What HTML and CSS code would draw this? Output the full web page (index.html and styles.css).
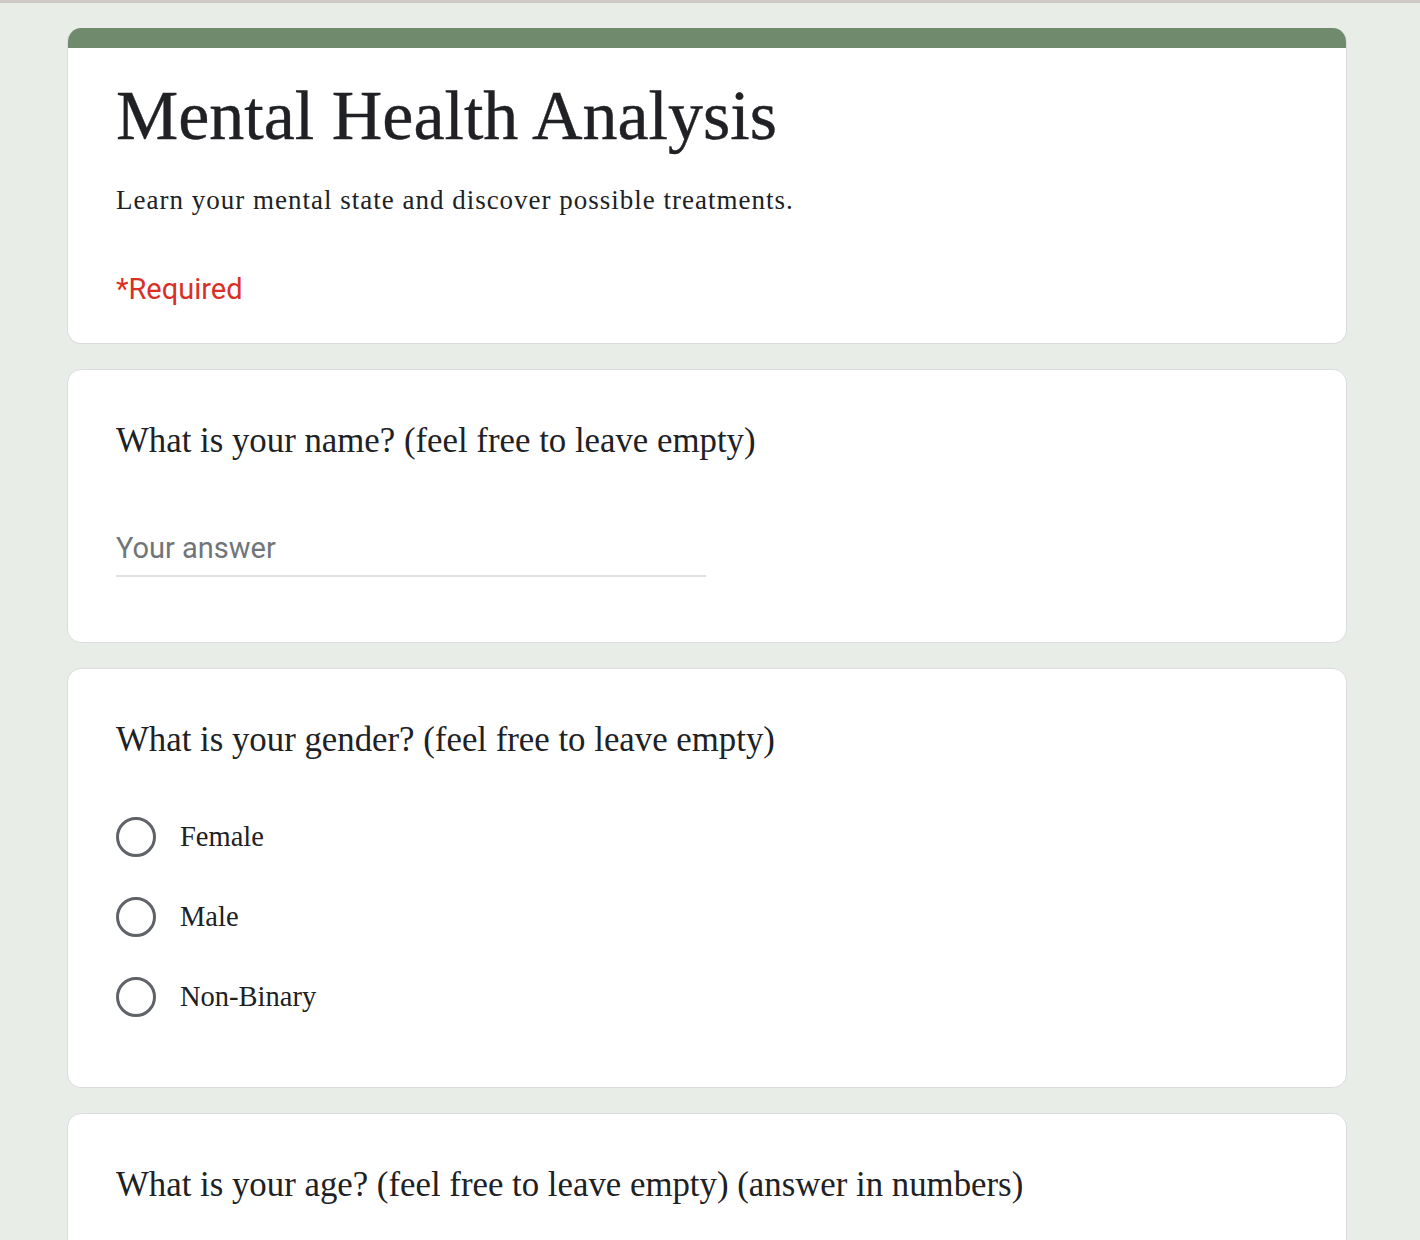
FILE: index.html
```html
<!DOCTYPE html>
<html>
<head>
<meta charset="utf-8">
<link rel="stylesheet" href="styles.css">
</head>
<body>
<div class="topline"></div>
<main class="form">
  <section class="card header-card">
    <div class="accent"></div>
    <div class="header-body">
      <h1 class="title">Mental Health Analysis</h1>
      <p class="desc">Learn your mental state and discover possible treatments.</p>
      <p class="required">*Required</p>
    </div>
  </section>

  <section class="card question">
    <h2 class="q-title">What is your name? (feel free to leave empty)</h2>
    <div class="text-input">Your answer</div>
  </section>

  <section class="card question">
    <h2 class="q-title">What is your gender? (feel free to leave empty)</h2>
    <div class="options">
      <label class="option"><span class="radio"></span><span class="opt-label">Female</span></label>
      <label class="option"><span class="radio"></span><span class="opt-label">Male</span></label>
      <label class="option"><span class="radio"></span><span class="opt-label">Non-Binary</span></label>
    </div>
  </section>

  <section class="card question">
    <h2 class="q-title">What is your age? (feel free to leave empty) (answer in numbers)</h2>
    <div class="text-input">Your answer</div>
  </section>
</main>
</body>
</html>
```

FILE: styles.css
```css
html, body {
  margin: 0;
  padding: 0;
  background: #e8ede7;
  height: 100%;
  overflow: hidden;
}

.topline {
  height: 3px;
  background: #cfc9c5;
}

.form {
  width: 1280px;
  margin-left: 67px;
  padding-top: 25px;
  display: flex;
  flex-direction: column;
  gap: 25px;
}

.card {
  background: #fff;
  border: 1px solid #dadce0;
  border-radius: 14px;
  box-sizing: border-box;
}

.header-card {
  border-top: none;
  overflow: hidden;
}

.accent {
  height: 20px;
  background: #6f8a6c;
}

.header-body {
  padding: 28px 48px 34px;
}

.title {
  margin: 0;
  font-family: "Liberation Serif", Georgia, serif;
  font-weight: 400;
  font-size: 70px;
  line-height: 80px;
  color: #202124;
  -webkit-text-stroke: 0.4px #202124;
}

.desc {
  margin: 24px 0 0;
  font-family: "Liberation Serif", serif;
  font-size: 27px;
  letter-spacing: 1px;
  line-height: 40px;
  color: #202124;
}

.required {
  margin: 49px 0 0;
  font-family: Roboto, "Liberation Sans", sans-serif;
  font-size: 29px;
  line-height: 40px;
  color: #d93025;
}

.question {
  padding: 46px 48px 65px;
}

.q-title {
  margin: 0;
  font-family: "Liberation Serif", serif;
  font-weight: 400;
  font-size: 34.8px;
  line-height: 50px;
  color: #202124;
}

.text-input {
  margin-top: 62px;
  width: 590px;
  padding-bottom: 7px;
  border-bottom: 2px solid #e0e0e0;
  font-family: Roboto, "Liberation Sans", sans-serif;
  font-size: 29px;
  line-height: 40px;
  color: #70757a;
}

.options {
  margin-top: 52px;
  margin-bottom: 5px;
  display: flex;
  flex-direction: column;
  gap: 40px;
}

.option {
  display: flex;
  align-items: center;
  gap: 24px;
  height: 40px;
}

.radio {
  width: 40px;
  height: 40px;
  border: 3px solid #5f6368;
  border-radius: 50%;
  box-sizing: border-box;
}

.opt-label {
  font-family: "Liberation Serif", serif;
  font-size: 28.5px;
  color: #202124;
}
```
